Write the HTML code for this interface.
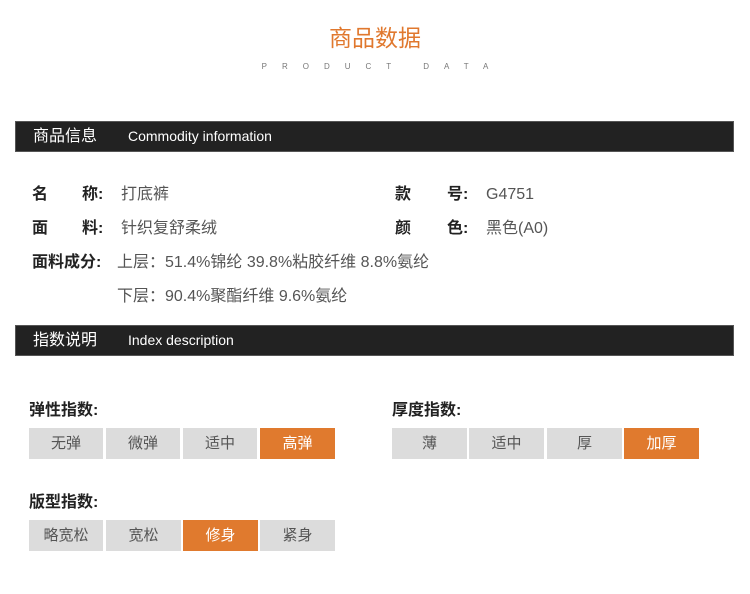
<!DOCTYPE html>
<html><head><meta charset="utf-8"><style>
*{margin:0;padding:0;box-sizing:border-box}
body{width:750px;height:594px;background:#fff;position:relative;overflow:hidden;font-family:"Liberation Sans","Noto Sans CJK SC",sans-serif}
.a{position:absolute;white-space:nowrap;line-height:22px}
.title{left:0;width:750px;text-align:center;top:25px;font-size:23px;line-height:26px;color:#e0782e}
.sub{left:0;width:750px;text-align:center;top:62px;font-size:8px;line-height:10px;color:#777;letter-spacing:15px;padding-left:15px}
.bar{position:absolute;left:15px;width:719px;height:31px;background:#222;border:1px solid #555;color:#fff}
.bar .c{position:absolute;left:17px;top:0;font-size:16px;line-height:29px}
.bar .e{position:absolute;left:112px;top:0;font-size:14px;line-height:29px}
.lb{font-size:16px;color:#222;font-weight:bold}
.v{font-size:16px;color:#555}
.h{font-size:16px;color:#222;font-weight:bold}
.b{position:absolute;height:31px;background:#dcdcdc;color:#555;font-size:15px;text-align:center;line-height:31px}
.o{background:#e07a2e;color:#fff}
</style></head><body>
<div class="a title">商品数据</div>
<div class="a sub">PRODUCT DATA</div>
<div class="bar" style="top:121px"><span class="c">商品信息</span><span class="e">Commodity information</span></div>

<div class="a lb" style="left:32px;top:184px">名</div>
<div class="a lb" style="left:82px;top:184px">称:</div>
<div class="a v" style="left:121px;top:184px">打底裤</div>
<div class="a lb" style="left:395px;top:184px">款</div>
<div class="a lb" style="left:447px;top:184px">号:</div>
<div class="a v" style="left:486px;top:184px">G4751</div>

<div class="a lb" style="left:32px;top:218px">面</div>
<div class="a lb" style="left:82px;top:218px">料:</div>
<div class="a v" style="left:121px;top:218px">针织复舒柔绒</div>
<div class="a lb" style="left:395px;top:218px">颜</div>
<div class="a lb" style="left:447px;top:218px">色:</div>
<div class="a v" style="left:486px;top:218px">黑色(A0)</div>

<div class="a lb" style="left:32px;top:252px">面料成分:</div>
<div class="a v" style="left:117px;top:252px">上层：51.4%锦纶 39.8%粘胶纤维 8.8%氨纶</div>
<div class="a v" style="left:117px;top:286px">下层：90.4%聚酯纤维 9.6%氨纶</div>

<div class="bar" style="top:325px"><span class="c">指数说明</span><span class="e">Index description</span></div>

<div class="a h" style="left:29px;top:400px">弹性指数:</div>
<div class="b" style="left:29px;top:428px;width:74px">无弹</div>
<div class="b" style="left:106px;top:428px;width:74px">微弹</div>
<div class="b" style="left:183px;top:428px;width:74px">适中</div>
<div class="b o" style="left:260px;top:428px;width:75px">高弹</div>

<div class="a h" style="left:392px;top:400px">厚度指数:</div>
<div class="b" style="left:392px;top:428px;width:75px">薄</div>
<div class="b" style="left:469px;top:428px;width:75px">适中</div>
<div class="b" style="left:547px;top:428px;width:75px">厚</div>
<div class="b o" style="left:624px;top:428px;width:75px">加厚</div>

<div class="a h" style="left:29px;top:492px">版型指数:</div>
<div class="b" style="left:29px;top:520px;width:74px">略宽松</div>
<div class="b" style="left:106px;top:520px;width:75px">宽松</div>
<div class="b o" style="left:183px;top:520px;width:75px">修身</div>
<div class="b" style="left:260px;top:520px;width:75px">紧身</div>
</body></html>
